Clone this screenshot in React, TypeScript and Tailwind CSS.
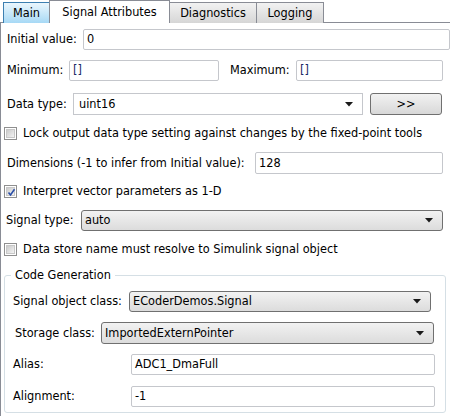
import React from "react";

const FONT = { fontFamily: '"DejaVu Sans Condensed", "DejaVu Sans", "Liberation Sans", sans-serif' };

function TextInput({ value, className = "", textClass = "text-black" }: { value: string; className?: string; textClass?: string }) {
  return (
    <div className={`flex items-center border border-[#c5c7cc] bg-white rounded-[2px] pl-[3px] ${className}`}>
      <span className={textClass}>{value}</span>
    </div>
  );
}

function Arrow() {
  return (
    <svg width="8" height="5" viewBox="0 0 8 5" className="ml-auto mr-[9px] shrink-0">
      <path d="M0 0 H8 L4 4.5 Z" fill="#1a1a1a" />
    </svg>
  );
}

function Select({ value, className = "" }: { value: string; className?: string }) {
  return (
    <div className={`flex items-center border border-[#707070] rounded-[3px] bg-gradient-to-b from-[#f2f2f2] to-[#dcdcdc] pl-[3px] ${className}`}>
      <span>{value}</span>
      <Arrow />
    </div>
  );
}

function Checkbox({ checked = false }: { checked?: boolean }) {
  return (
    <div className="w-[13px] h-[13px] border border-[#8f8f8f] bg-white p-[1px] shrink-0">
      <div className="w-full h-full bg-gradient-to-br from-[#cbcbcb] to-[#f4f4f4] border border-[#c8c8c8] relative">
        {checked && (
          <svg width="9" height="9" viewBox="0 0 9 9" className="absolute left-[0px] top-[0px]">
            <path d="M1.5 4.5 L3.5 7 L7.5 1.2" stroke="#2b4fa8" strokeWidth="1.6" fill="none" />
          </svg>
        )}
      </div>
    </div>
  );
}

export default function App() {
  return (
    <div className="w-[450px] h-[416px] bg-white text-[12.6px] text-black overflow-hidden leading-none" style={FONT}>
      {/* Tabs */}
      <div className="flex items-end h-[23px] pl-[3px] relative">
        <div className="absolute left-0 right-0 bottom-0 h-px bg-[#898c95]" />
        <div className="h-[21px] w-[47px] border border-b-0 border-[#3c7fb1] bg-gradient-to-b from-[#eaf6fd] to-[#a7d9f5] flex items-center justify-center relative">
          Main
        </div>
        <div className="h-[23px] w-[121px] border border-b-0 border-[#898c95] bg-white flex items-center justify-center relative z-10 -ml-px">
          Signal Attributes
        </div>
        <div className="h-[21px] w-[88px] border border-b-0 border-[#898c95] bg-gradient-to-b from-[#f2f2f2] to-[#d6d6d6] flex items-center justify-center relative -ml-px">
          Diagnostics
        </div>
        <div className="h-[21px] w-[68px] border border-b-0 border-[#898c95] bg-gradient-to-b from-[#f2f2f2] to-[#d6d6d6] flex items-center justify-center relative -ml-px">
          Logging
        </div>
      </div>

      {/* Content */}
      <div className="border-l border-[#898c95] h-[393px] flex flex-col">
        <div className="flex items-center mt-[6px] pl-[6px] h-[21px]">
          <span className="w-[76px]">Initial value:</span>
          <TextInput value="0" className="w-[367px] h-[21px]" />
        </div>

        <div className="flex items-center mt-[10px] pl-[6px] h-[21px]">
          <span className="w-[62px]">Minimum:</span>
          <TextInput value="[]" className="w-[150px] h-[21px]" textClass="text-[#1c2a66]" />
          <span className="ml-[11px] w-[66px]">Maximum:</span>
          <TextInput value="[]" className="w-[147px] h-[21px]" textClass="text-[#1c2a66]" />
        </div>

        <div className="flex items-center mt-[12px] pl-[6px] h-[22px]">
          <span className="w-[66px]">Data type:</span>
          <div className="flex items-center w-[290px] h-[22px] border border-[#c5c7cc] bg-white pl-[5px]">
            <span>uint16</span>
            <Arrow />
          </div>
          <div className="ml-[7px] w-[72px] h-[22px] border border-[#707070] rounded-[3px] bg-gradient-to-b from-[#f2f2f2] to-[#d8d8d8] flex items-center justify-center">
            &gt;&gt;
          </div>
        </div>

        <div className="flex items-center mt-[12px] pl-[3px] h-[13px] gap-[6px]">
          <Checkbox />
          <span className="whitespace-nowrap">Lock output data type setting against changes by the fixed-point tools</span>
        </div>

        <div className="flex items-center mt-[12px] pl-[6px] h-[22px]">
          <span className="w-[248px] whitespace-nowrap">Dimensions (-1 to infer from Initial value):</span>
          <TextInput value="128" className="w-[188px] h-[22px]" />
        </div>

        <div className="flex items-center mt-[11px] pl-[3px] h-[13px] gap-[6px]">
          <Checkbox checked />
          <span>Interpret vector parameters as 1-D</span>
        </div>

        <div className="flex items-center mt-[12px] pl-[5px] h-[21px]">
          <span className="w-[75px]">Signal type:</span>
          <Select value="auto" className="w-[362px] h-[21px]" />
        </div>

        <div className="flex items-center mt-[12px] pl-[3px] h-[13px] gap-[6px]">
          <Checkbox />
          <span>Data store name must resolve to Simulink signal object</span>
        </div>

        {/* Group box */}
        <div className="relative mt-[19px] ml-[3px] w-[442px] h-[138px] border border-[#d5dfe5] rounded-[3px] flex flex-col">
          <span className="absolute left-[6px] -top-[7px] bg-white px-[4px]">Code Generation</span>
          <div className="flex items-center mt-[15px] pl-[8px] h-[21px]">
            <span className="w-[116px] whitespace-nowrap">Signal object class:</span>
            <Select value="ECoderDemos.Signal" className="w-[302px] h-[21px]" />
          </div>
          <div className="flex items-center mt-[10px] pl-[10px] h-[22px]">
            <span className="w-[86px] whitespace-nowrap">Storage class:</span>
            <Select value="ImportedExternPointer" className="w-[333px] h-[22px]" />
          </div>
          <div className="flex items-center mt-[10px] pl-[8px] h-[21px]">
            <span className="w-[118px]">Alias:</span>
            <TextInput value="ADC1_DmaFull" className="w-[304px] h-[21px]" />
          </div>
          <div className="flex items-center mt-[11px] pl-[8px] h-[21px]">
            <span className="w-[118px]">Alignment:</span>
            <TextInput value="-1" className="w-[304px] h-[21px]" />
          </div>
        </div>
      </div>
    </div>
  );
}
